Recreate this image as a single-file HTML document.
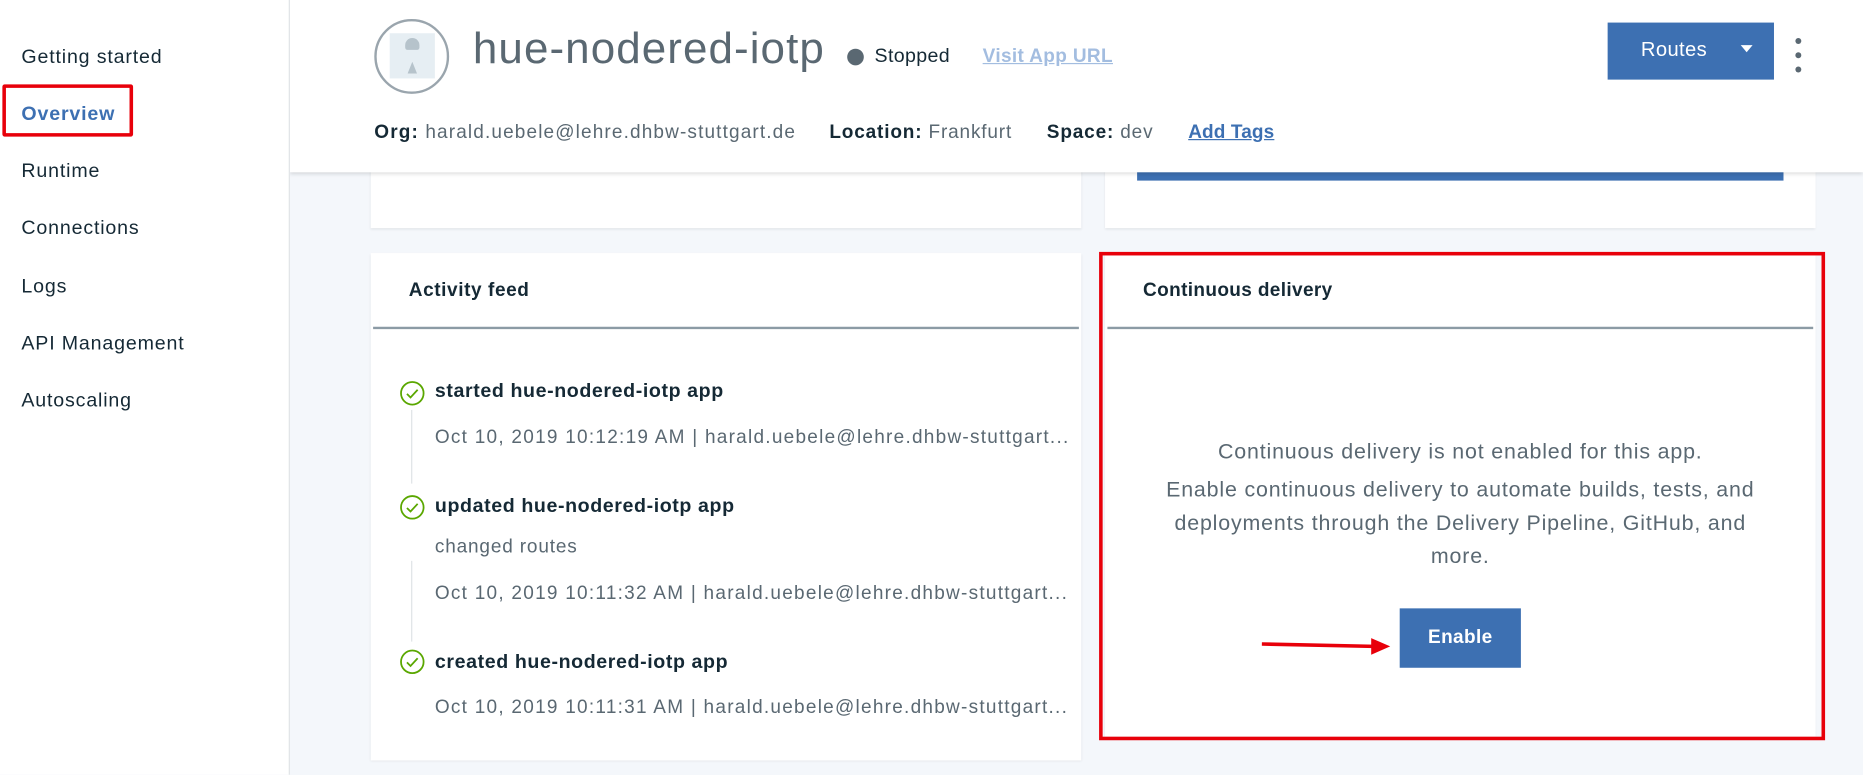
<!DOCTYPE html>
<html><head><meta charset="utf-8"><style>
*{margin:0;padding:0;box-sizing:border-box}
html,body{width:1863px;height:775px;overflow:hidden;background:#f4f7fb;font-family:"Liberation Sans",sans-serif}
#w{position:absolute;left:0;top:0;width:1568px;height:652px;transform:scale(1.1882);transform-origin:0 0;background:#f4f7fb;letter-spacing:0.7px}
.a{position:absolute;white-space:nowrap}
.side{position:absolute;left:0;top:0;width:244px;height:652px;background:#fff;border-right:1px solid #dfe3e6}
.side div{position:absolute;left:18px;font-size:16.5px;color:#152935}
.card{position:absolute;background:#fff;box-shadow:0 1px 2px rgba(0,0,0,.08)}
.hdr{position:absolute;left:244px;top:0;width:1324px;height:145px;background:#fff;box-shadow:0 2px 3px rgba(0,0,0,.12)}
.b{font-weight:bold;color:#152935}
.g{color:#5a6872}
.d{letter-spacing:1.05px}
</style></head><body><div id="w">
<div class="card" style="left:312px;top:130px;width:598px;height:62px"></div>
<div class="card" style="left:930px;top:130px;width:598px;height:62px"></div>
<div class="a" style="left:957px;top:140px;width:544px;height:12px;background:#3d70b2"></div>
<div class="hdr"></div>
<div class="side">
<div style="top:39px">Getting started</div>
<div style="top:87px;color:#3d70b2;font-weight:bold">Overview</div>
<div style="top:135px">Runtime</div>
<div style="top:183px">Connections</div>
<div style="top:232px">Logs</div>
<div style="top:280px">API Management</div>
<div style="top:328px">Autoscaling</div>
</div>
<div class="a" style="left:2px;top:71px;width:110px;height:44px;border:3px solid #e8000a;border-radius:2px"></div>
<div class="a" style="left:315px;top:16px;width:63px;height:63px;border:2px solid #9aa5ad;border-radius:50%"></div>
<div class="a" style="left:328px;top:28px;width:38px;height:38px;background:#e6eef3"></div>
<div class="a" style="left:341px;top:32px;width:12px;height:10px;border-radius:6px 6px 2px 2px;background:#b6c3cb"></div>
<div class="a" style="left:343px;top:52px;width:8px;height:10px;background:#b6c3cb;clip-path:polygon(50% 0,100% 100%,0 100%)"></div>
<div class="a" style="left:398px;top:20px;font-size:37px;color:#5a6872;font-weight:300;letter-spacing:0.9px">hue-nodered-iotp</div>
<div class="a" style="left:713px;top:41px;width:14px;height:14px;border-radius:50%;background:#5a6872"></div>
<div class="a" style="left:736px;top:38px;font-size:16.5px;color:#152935;letter-spacing:0.3px">Stopped</div>
<div class="a" style="left:827px;top:39px;font-size:16px;font-weight:bold;color:#a3bde0;text-decoration:underline;letter-spacing:0.3px">Visit App URL</div>
<div class="a" style="left:1353px;top:19px;width:140px;height:48px;background:#3d70b2"></div>
<div class="a" style="left:1381px;top:32px;font-size:17px;color:#fff;letter-spacing:0.3px">Routes</div>
<div class="a" style="left:1465px;top:38px;width:0;height:0;border-left:5px solid transparent;border-right:5px solid transparent;border-top:6px solid #fff"></div>
<div class="a" style="left:1511px;top:32px;width:5px;height:5px;border-radius:50%;background:#5a6872;box-shadow:0 12px 0 #5a6872,0 24px 0 #5a6872"></div>
<div class="a" style="left:315px;top:103px;font-size:16px;letter-spacing:0.95px"><span class="b">Org:</span> <span class="g">harald.uebele@lehre.dhbw-stuttgart.de</span></div>
<div class="a" style="left:698px;top:103px;font-size:16px"><span class="b">Location:</span> <span class="g">Frankfurt</span></div>
<div class="a" style="left:881px;top:103px;font-size:16px"><span class="b">Space:</span> <span class="g">dev</span></div>
<div class="a" style="left:1000px;top:103px;font-size:16px;font-weight:bold;color:#3d70b2;text-decoration:underline;letter-spacing:0.1px">Add Tags</div>

<div class="card" style="left:312px;top:213px;width:598px;height:427px"></div>
<div class="a b" style="left:344px;top:236px;font-size:16px;letter-spacing:0.5px">Activity feed</div>
<div class="a" style="left:314px;top:275px;width:594px;height:2px;background:#8c9ba5"></div>
<div class="a" style="left:346px;top:345px;width:1px;height:62px;background:#dfe3e6"></div>
<div class="a" style="left:346px;top:472px;width:1px;height:68px;background:#dfe3e6"></div>
<svg class="a" style="left:336px;top:320px" width="22" height="22" viewBox="0 0 22 22"><circle cx="11" cy="11" r="9.5" fill="#fff" stroke="#5aa700" stroke-width="1.5"/><path d="M6.5 11.5l3 3 6-6.5" fill="none" stroke="#5aa700" stroke-width="1.5"/></svg>
<svg class="a" style="left:336px;top:416px" width="22" height="22" viewBox="0 0 22 22"><circle cx="11" cy="11" r="9.5" fill="#fff" stroke="#5aa700" stroke-width="1.5"/><path d="M6.5 11.5l3 3 6-6.5" fill="none" stroke="#5aa700" stroke-width="1.5"/></svg>
<svg class="a" style="left:336px;top:546px" width="22" height="22" viewBox="0 0 22 22"><circle cx="11" cy="11" r="9.5" fill="#fff" stroke="#5aa700" stroke-width="1.5"/><path d="M6.5 11.5l3 3 6-6.5" fill="none" stroke="#5aa700" stroke-width="1.5"/></svg>
<div class="a b" style="left:366px;top:320px;font-size:16.5px;letter-spacing:0.5px">started hue-nodered-iotp app</div>
<div class="a g d" style="left:366px;top:360px;font-size:16px">Oct 10, 2019 10:12:19 AM | harald.uebele@lehre.dhbw-stuttgart...</div>
<div class="a b" style="left:366px;top:417px;font-size:16.5px;letter-spacing:0.5px">updated hue-nodered-iotp app</div>
<div class="a g" style="left:366px;top:452px;font-size:16px">changed routes</div>
<div class="a g d" style="left:366px;top:491px;font-size:16px">Oct 10, 2019 10:11:32 AM | harald.uebele@lehre.dhbw-stuttgart...</div>
<div class="a b" style="left:366px;top:548px;font-size:16.5px;letter-spacing:0.5px">created hue-nodered-iotp app</div>
<div class="a g d" style="left:366px;top:587px;font-size:16px">Oct 10, 2019 10:11:31 AM | harald.uebele@lehre.dhbw-stuttgart...</div>

<div class="card" style="left:930px;top:213px;width:598px;height:407px"></div>
<div class="a b" style="left:962px;top:236px;font-size:16px;letter-spacing:0.3px">Continuous delivery</div>
<div class="a" style="left:932px;top:275px;width:594px;height:2px;background:#8c9ba5"></div>
<div class="a g" style="left:930px;top:366px;width:598px;text-align:center;font-size:18px;white-space:normal;line-height:28px;padding:0 38px">Continuous delivery is not enabled for this app.</div>
<div class="a g" style="left:930px;top:398px;width:598px;text-align:center;font-size:18px;white-space:normal;line-height:28px;padding:0 38px">Enable continuous delivery to automate builds, tests, and deployments through the Delivery Pipeline, GitHub, and more.</div>
<div class="a" style="left:1178px;top:512px;width:102px;height:50px;background:#3d70b2;color:#fff;font-weight:bold;font-size:16px;text-align:center;line-height:50px;letter-spacing:0.3px">Enable</div>
<svg class="a" style="left:1060px;top:533px" width="112" height="20"><path d="M2 9L96 11" stroke="#e8000a" stroke-width="3"/><path d="M94 4L110 11L94 18Z" fill="#e8000a"/></svg>
<div class="a" style="left:925px;top:212px;width:611px;height:411px;border:3px solid #e8000a"></div>
</div></body></html>
